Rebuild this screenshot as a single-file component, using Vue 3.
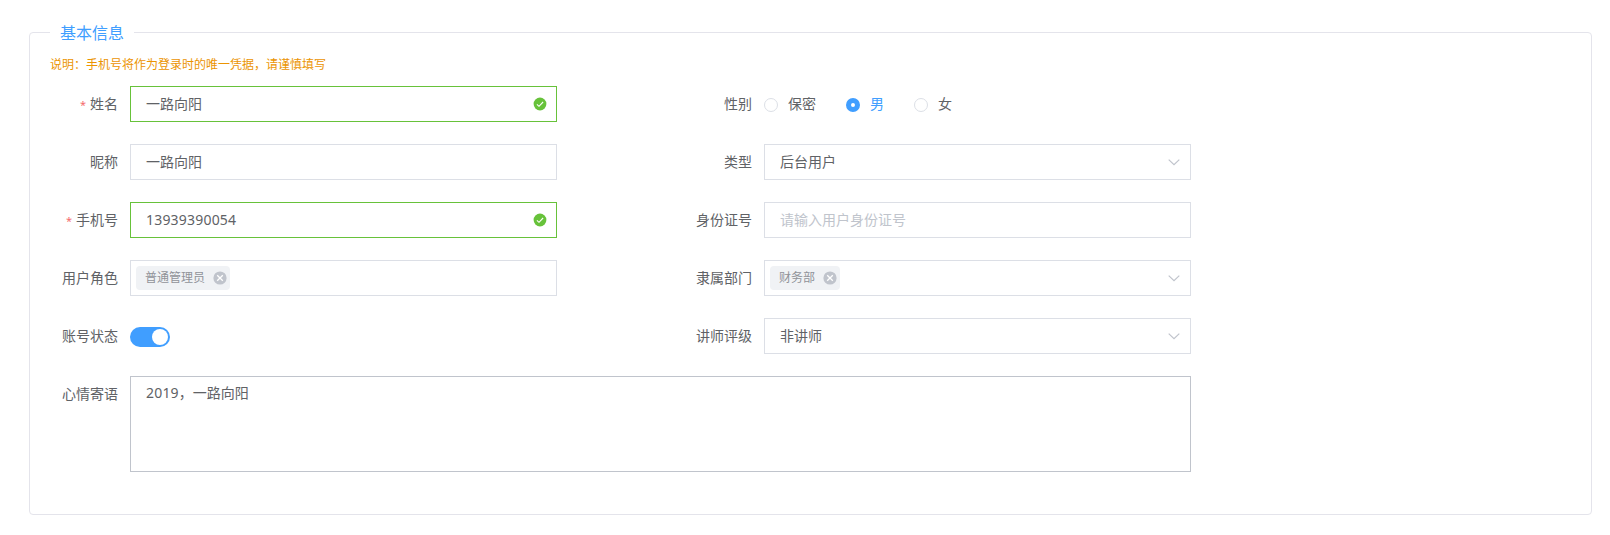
<script setup>
const rows = [
  {
    left: { label: '姓名', required: true, type: 'input', value: '一路向阳', ok: true },
    right: { label: '性别', type: 'radio', options: ['保密', '男', '女'], value: '男' },
  },
  {
    left: { label: '昵称', type: 'input', value: '一路向阳' },
    right: { label: '类型', type: 'input', value: '后台用户', arrow: true },
  },
  {
    left: { label: '手机号', required: true, type: 'input', value: '13939390054', ok: true, numeric: true },
    right: { label: '身份证号', type: 'input', placeholder: '请输入用户身份证号' },
  },
  {
    left: { label: '用户角色', type: 'input', tag: '普通管理员' },
    right: { label: '隶属部门', type: 'input', tag: '财务部', arrow: true },
  },
  {
    left: { label: '账号状态', type: 'switch' },
    right: { label: '讲师评级', type: 'input', value: '非讲师', arrow: true },
  },
]
</script>

<template>
  <main class="page">
    <fieldset class="panel">
      <legend class="legend">基本信息</legend>
      <p class="note">说明：手机号将作为登录时的唯一凭据，请谨慎填写</p>
      <div class="form">
        <div v-for="(row, i) in rows" :key="i" class="row">
          <div v-for="(f, side) in row" :key="side" class="item">
            <label class="label"><span v-if="f.required" class="star">*</span>{{ f.label }}</label>
            <div v-if="f.type === 'input'" class="box" :class="{ ok: f.ok, tagged: f.tag }">
              <span v-if="f.tag" class="tag">
                {{ f.tag }}
                <svg class="close" viewBox="0 0 14 14">
                  <circle cx="7" cy="7" r="6.6" fill="#c0c4cc" />
                  <path d="M4.2 4.2l5.6 5.6M9.8 4.2L4.2 9.8" stroke="#fff" stroke-width="1.3" />
                </svg>
              </span>
              <span v-else-if="f.value" class="value" :class="{ numeric: f.numeric }">{{ f.value }}</span>
              <span v-else class="placeholder">{{ f.placeholder }}</span>
              <svg v-if="f.ok" class="check" viewBox="0 0 14 14">
                <circle cx="7" cy="7" r="6.4" fill="#67c23a" />
                <path d="M3.9 7.3l2.1 2 4.1-4.3" fill="none" stroke="#fff" stroke-width="1.1" />
              </svg>
              <svg v-if="f.arrow" class="arrow" viewBox="0 0 14 14">
                <path d="M1.7 4.6L7 9.7l5.3-5.1" fill="none" stroke="#c0c4cc" stroke-width="1.2" />
              </svg>
            </div>
            <div v-else-if="f.type === 'radio'" class="radios">
              <span v-for="o in f.options" :key="o" class="radio" :class="{ on: o === f.value }">
                <i class="dot"></i>{{ o }}
              </span>
            </div>
            <div v-else class="switch"><i class="knob"></i></div>
          </div>
        </div>
        <div class="memo">
          <label class="label">心情寄语</label>
          <div class="area"><span class="numeric">2019</span>，一路向阳</div>
        </div>
      </div>
    </fieldset>
  </main>
</template>

<style>
body {
  margin: 0;
  background: #fff;
}
</style>

<style scoped>
.page {
  box-sizing: border-box;
  height: 535px;
  padding: 22px 18px 20px 29px;
  font-family: "Noto Sans", "Noto Sans CJK SC", sans-serif;
  font-size: 14px;
  color: #606266;
}
.panel {
  box-sizing: border-box;
  height: 493px;
  min-width: 0;
  margin: 0;
  padding: 0 20px;
  border: 1px solid #e4e4eb;
  border-radius: 4px;
}
.legend {
  box-sizing: border-box;
  height: 21px;
  padding: 1px 10px 0;
  font-size: 16px;
  line-height: 21px;
  color: #409eff;
}
.note {
  margin: 12px 0 0;
  height: 18px;
  font-size: 12px;
  line-height: 19px;
  color: #eb9402;
}
.form {
  display: flex;
  flex-direction: column;
  gap: 22px;
  width: 1141px;
  margin-top: 13px;
}
.row {
  display: grid;
  grid-template-columns: 507px 507px;
  column-gap: 127px;
}
.item {
  display: flex;
  height: 36px;
  align-items: center;
}
.label {
  flex: none;
  box-sizing: border-box;
  width: 80px;
  padding-right: 12px;
  line-height: 36px;
  text-align: right;
  white-space: nowrap;
}
.star {
  margin-right: 4px;
  font-size: 11px;
  color: #f56c6c;
}
.box {
  flex: 1;
  box-sizing: border-box;
  display: flex;
  align-items: center;
  height: 36px;
  padding: 0 9px 0 15px;
  border: 1px solid #dcdfe6;
  line-height: 34px;
}
.box.ok {
  border-color: #67c23a;
}
.box.tagged {
  padding-left: 5px;
}
.numeric {
  letter-spacing: 0.2px;
}
.placeholder {
  color: #c0c4cc;
}
.tag {
  display: flex;
  align-items: center;
  gap: 8px;
  height: 24px;
  padding: 0 3px 0 9px;
  border-radius: 4px;
  background: #f0f2f5;
  font-size: 12px;
  line-height: 24px;
  color: #909399;
}
.close,
.check,
.arrow {
  flex: none;
  width: 14px;
  height: 14px;
}
.check,
.arrow {
  margin-left: auto;
}
.radios {
  display: flex;
  gap: 30px;
}
.radio {
  display: flex;
  align-items: center;
  gap: 10px;
  line-height: 18px;
}
.dot {
  box-sizing: border-box;
  width: 14px;
  height: 14px;
  margin-top: 2px;
  border: 1px solid #dcdfe6;
  border-radius: 50%;
}
.radio.on {
  color: #409eff;
}
.on .dot {
  border: 5px solid #409eff;
}
.switch {
  box-sizing: border-box;
  display: flex;
  justify-content: flex-end;
  width: 40px;
  height: 20px;
  margin-top: 2px;
  padding: 2px;
  border-radius: 10px;
  background: #409eff;
}
.knob {
  width: 16px;
  height: 16px;
  border-radius: 50%;
  background: #fff;
}
.memo {
  display: flex;
}
.area {
  flex: 1;
  box-sizing: border-box;
  height: 96px;
  padding: 5px 15px;
  border: 1px solid #c0c4cc;
  line-height: 21px;
}
</style>
